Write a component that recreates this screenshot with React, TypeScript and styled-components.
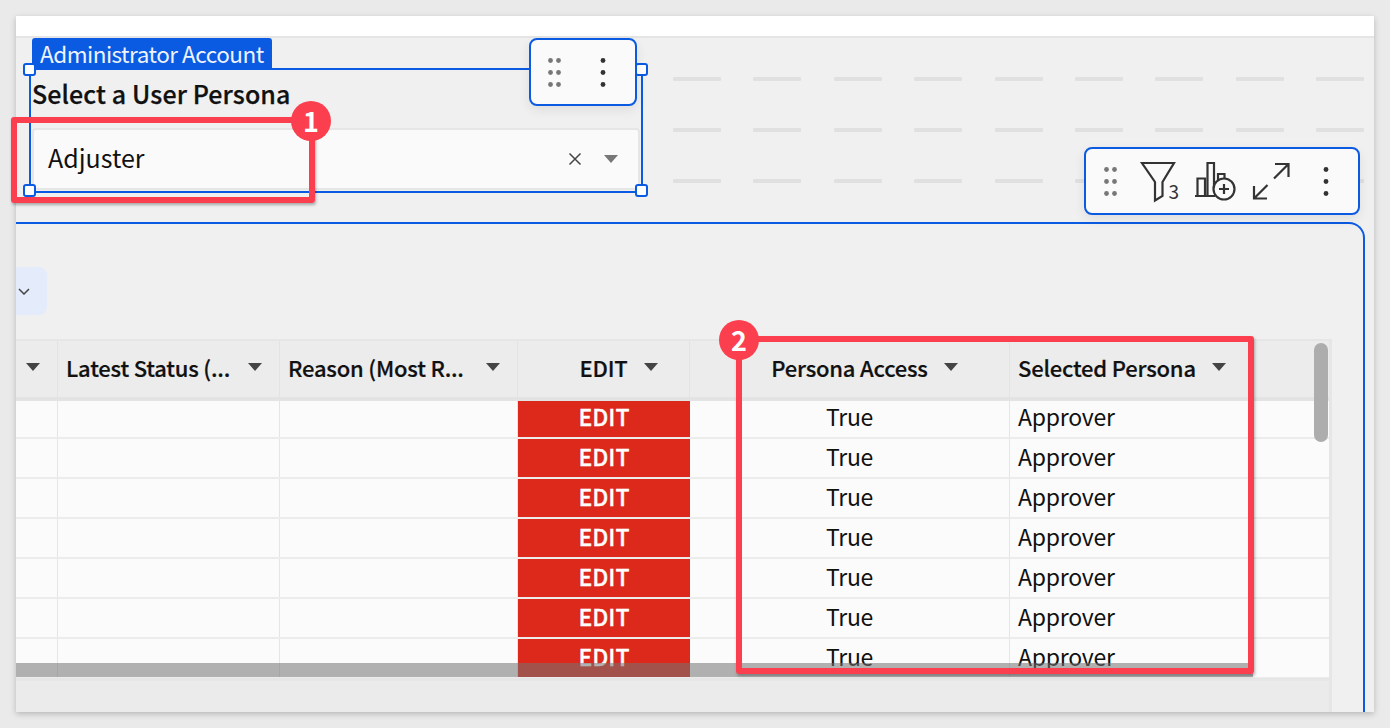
import styled, { createGlobalStyle } from "styled-components";

const BLUE = "#0b5be2";
const RED = "#fb3f4e";
const FONT = `"Noto Sans CJK SC", "Noto Sans", sans-serif`;

const GlobalStyle = createGlobalStyle`
  html, body {
    margin: 0;
    padding: 0;
    background: #eaeaea;
    overflow: hidden;
  }
  body {
    font-family: ${FONT};
    color: #111;
  }
  * {
    box-sizing: border-box;
  }
`;

const Stage = styled.div`
  position: relative;
  width: 1390px;
  height: 728px;
  padding: 16px;
  overflow: hidden;
`;

const Page = styled.div`
  width: 1358px;
  height: 696px;
  display: flex;
  flex-direction: column;
  background: #f0f0f0;
  box-shadow: 0 2px 6px rgba(0, 0, 0, 0.22);
  overflow: hidden;
`;

const TopStrip = styled.div`
  flex: none;
  height: 22px;
  background: #fff;
  border-bottom: 2px solid #e5e5e5;
`;

const Canvas = styled.div`
  position: relative;
  flex: 1;
  min-height: 0;
  display: flex;
  flex-direction: column;
`;

const TopRow = styled.div`
  flex: none;
  height: 184px;
  display: flex;
`;

const ControlColumn = styled.div`
  flex: none;
  width: 614px;
  margin-left: 13px;
  display: flex;
  flex-direction: column;
`;

const ControlTab = styled.div`
  align-self: flex-start;
  margin-left: 3px;
  width: 240px;
  height: 30px;
  padding-left: 8px;
  background: ${BLUE};
  color: #eef3fd;
  border-radius: 3px 3px 0 0;
  font-size: 22.5px;
  letter-spacing: -0.5px;
  line-height: 30px;
  white-space: nowrap;
`;

const ControlFrame = styled.div`
  position: relative;
  height: 125px;
  padding: 0 1px;
  border: 2px solid ${BLUE};
`;

const ControlTitle = styled.div`
  height: 50px;
  font-size: 25px;
  font-weight: 500;
  letter-spacing: 0.1px;
  -webkit-text-stroke: 0.25px #111;
  line-height: 46px;
  white-space: nowrap;
`;

const SelectBox = styled.div`
  margin-top: 8px;
  height: 62px;
  display: flex;
  align-items: center;
  padding: 0 20px 0 14px;
  background: #fafafa;
  border: 2px solid #e6e6e6;
  border-radius: 4px;
`;

const SelectValue = styled.span`
  flex: 1;
  padding-bottom: 5px;
  font-size: 25px;
  line-height: 34px;
`;

const Handle = styled.span<{ $right?: boolean; $bottom?: boolean }>`
  position: absolute;
  width: 13px;
  height: 13px;
  background: #fff;
  border: 2px solid ${BLUE};
  border-radius: 3px;
  ${(p) => (p.$right ? "right: -7px;" : "left: -8px;")}
  ${(p) => (p.$bottom ? "bottom: -6px;" : "top: -7px;")}
`;

const GuideRows = styled.div`
  flex: none;
  margin-left: 30px;
  padding-top: 39px;
  display: flex;
  flex-direction: column;
  gap: 47px;
`;

const GuideRow = styled.div`
  display: flex;
  gap: 32.4px;
`;

const GuideDash = styled.span`
  width: 48px;
  height: 4px;
  background: #e0e0e0;
  border-radius: 1px;
`;

const FloatingBar = styled.div<{ $top: number; $right: number; $w: number; $h: number }>`
  position: absolute;
  top: ${(p) => p.$top}px;
  right: ${(p) => p.$right}px;
  width: ${(p) => p.$w}px;
  height: ${(p) => p.$h}px;
  display: flex;
  align-items: center;
  background: #fafafa;
  border: 2px solid ${BLUE};
  border-radius: 8px;
  box-shadow: 0 4px 12px rgba(0, 0, 0, 0.08);
`;

const BarIcon = styled.svg<{ $ml: number }>`
  flex: none;
  margin-left: ${(p) => p.$ml}px;
  display: block;
  overflow: visible;
`;

const Panel = styled.div`
  flex: 1;
  min-height: 0;
  margin-right: 9px;
  display: flex;
  flex-direction: column;
  padding-top: 43px;
  border-top: 2px solid ${BLUE};
  border-right: 2px solid ${BLUE};
  border-radius: 0 16px 0 0;
`;

const FilterPill = styled.div`
  flex: none;
  width: 31px;
  height: 48px;
  display: flex;
  align-items: center;
  justify-content: flex-end;
  padding-right: 17px;
  background: #e4ebfb;
  border-radius: 0 8px 8px 0;
`;

const TableWrap = styled.div`
  position: relative;
  flex: 1;
  min-height: 0;
  width: 1316px;
  margin-top: 24px;
  display: flex;
  flex-direction: column;
  border-top: 2px solid #e6e6e6;
  border-right: 3px solid #e6e6e6;
  overflow: hidden;
`;

const COLUMNS = "42px 222px 238px 172px 320px 319px";

const HeaderRow = styled.div`
  position: relative;
  z-index: 1;
  flex: none;
  height: 60px;
  display: grid;
  grid-template-columns: ${COLUMNS};
  background: #ececec;
  border-bottom: 4px solid #e3e3e3;
`;

type HeaderAlign = "end" | "between" | "start" | "center";

const HEADER_LAYOUT: Record<HeaderAlign, string> = {
  end: "justify-content: flex-end; padding: 0 17px 0 8px;",
  between: "justify-content: space-between; padding: 0 17px 0 8px;",
  start: "justify-content: flex-start; gap: 16px; padding: 0 8px;",
  center: "justify-content: center; gap: 16px; padding: 0 0 0 30px;",
};

const HeaderCell = styled.div<{ $align: HeaderAlign }>`
  display: flex;
  align-items: center;
  ${(p) => HEADER_LAYOUT[p.$align]}
  padding-bottom: 5px;
  border-right: 1px solid #e3e3e3;
  font-size: 22px;
  font-weight: 500;
  letter-spacing: -0.2px;
  -webkit-text-stroke: 0.2px #111;
  line-height: 30px;
  white-space: nowrap;
  &:last-child {
    border-right: none;
  }
`;

const BodyRows = styled.div`
  flex: none;
  height: 279px;
  margin-top: -2px;
  overflow: hidden;
`;

const Row = styled.div`
  height: 40px;
  display: grid;
  grid-template-columns: ${COLUMNS};
  background: #fbfbfb;
  border-bottom: 2px solid #ececec;
`;

const Cell = styled.div<{ $center?: boolean }>`
  padding: 0 8px;
  border-right: 1px solid #e5e5e5;
  font-size: 23px;
  letter-spacing: -0.25px;
  line-height: 34px;
  text-align: ${(p) => (p.$center ? "center" : "left")};
  &:last-child {
    border-right: none;
  }
`;

const EditCell = styled.div`
  background: #dd281c;
  color: #fff;
  font-size: 23px;
  font-weight: 500;
  -webkit-text-stroke: 0.3px #fff;
  line-height: 34px;
  text-align: center;
`;

const FooterBar = styled.div`
  flex: 1;
  background: #ebebeb;
  border-top: 3px solid #e6e6e6;
`;

const HScrollThumb = styled.div`
  position: absolute;
  left: 0;
  top: 322px;
  width: 1237px;
  height: 14px;
  background: rgba(115, 115, 115, 0.55);
`;

const VScrollThumb = styled.div`
  position: absolute;
  top: 2px;
  left: 1298px;
  width: 14px;
  height: 99px;
  background: #adadad;
  border-radius: 7px;
  z-index: 2;
`;

const Callout = styled.div<{ $x: number; $y: number; $w: number; $h: number }>`
  position: absolute;
  z-index: 5;
  left: ${(p) => p.$x}px;
  top: ${(p) => p.$y}px;
  width: ${(p) => p.$w}px;
  height: ${(p) => p.$h}px;
  border: 6px solid ${RED};
  border-radius: 3px;
  box-shadow: 1px 2px 3px rgba(0, 0, 0, 0.3);
`;

const CalloutBadge = styled.div<{ $x: number; $y: number }>`
  position: absolute;
  z-index: 6;
  left: ${(p) => p.$x}px;
  top: ${(p) => p.$y}px;
  width: 40px;
  height: 40px;
  display: flex;
  align-items: center;
  justify-content: center;
  background: ${RED};
  color: #fff;
  border-radius: 50%;
  font-size: 27px;
  font-weight: 700;
  line-height: 40px;
`;

const Caret = ({ color = "#444" }: { color?: string }) => (
  <svg width="14" height="8" viewBox="0 0 14 8">
    <path d="M0 0h14L7 8z" fill={color} />
  </svg>
);

const Dots = ({ columns, color }: { columns: number[]; color: string }) => (
  <>
    {columns.map((cx) =>
      [2.5, 14.5, 26.5].map((cy) => (
        <circle key={`${cx}-${cy}`} cx={cx} cy={cy} r="2.4" fill={color} />
      ))
    )}
  </>
);

const rows = [0, 1, 2, 3, 4, 5, 6];
const guideLines = [0, 1, 2];
const guideDashes = [0, 1, 2, 3, 4, 5, 6, 7, 8];

function App() {
  return (
    <Stage>
      <GlobalStyle />
      <Page>
        <TopStrip />
        <Canvas>
          <TopRow>
            <ControlColumn>
              <ControlTab>Administrator Account</ControlTab>
              <ControlFrame>
                <Handle />
                <Handle $right />
                <Handle $bottom />
                <Handle $right $bottom />
                <ControlTitle>Select a User Persona</ControlTitle>
                <SelectBox>
                  <SelectValue>Adjuster</SelectValue>
                  <svg width="14" height="14" viewBox="0 0 14 14">
                    <path d="M1.5 1.5l11 11M12.5 1.5l-11 11" stroke="#444" strokeWidth="1.5" />
                  </svg>
                  <BarIcon $ml={22} width="14" height="8" viewBox="0 0 14 8">
                    <path d="M0 0h14L7 8z" fill="#777" />
                  </BarIcon>
                </SelectBox>
              </ControlFrame>
            </ControlColumn>
            <GuideRows>
              {guideLines.map((line) => (
                <GuideRow key={line}>
                  {guideDashes.map((dash) => (
                    <GuideDash key={dash} />
                  ))}
                </GuideRow>
              ))}
            </GuideRows>
          </TopRow>

          <FloatingBar $top={0} $right={737} $w={108} $h={68}>
            <BarIcon $ml={17} width="14" height="29" viewBox="0 0 14 29">
              <Dots columns={[2.5, 10.5]} color="#777" />
            </BarIcon>
            <BarIcon $ml={38} width="6" height="29" viewBox="0 0 6 29">
              <Dots columns={[3]} color="#333" />
            </BarIcon>
          </FloatingBar>

          <FloatingBar $top={109} $right={14} $w={276} $h={68}>
            <BarIcon $ml={18} width="14" height="29" viewBox="0 0 14 29">
              <Dots columns={[2.5, 10.5]} color="#777" />
            </BarIcon>
            <BarIcon $ml={22} width="40" height="40" viewBox="0 0 40 40">
              <path
                d="M2 2h32L22.5 21v14l-7.500 4.500V21z"
                fill="none"
                stroke="#333"
                strokeWidth="2.200"
                strokeLinejoin="miter"
              />
              <text x="28.500" y="38" fontSize="19" fill="#333" fontFamily={FONT}>
                3
              </text>
            </BarIcon>
            <BarIcon $ml={14} width="42" height="40" viewBox="0 0 42 40">
              <path
                d="M1 35h20M3.500 35V17.500h7.500V35M13.500 35V2h6.500v25M24 19v-6h6.500v6"
                fill="none"
                stroke="#333"
                strokeWidth="2.200"
              />
              <circle cx="30" cy="28" r="10.500" fill="#fafafa" stroke="#333" strokeWidth="2.200" />
              <path d="M25 28h10M30 23v10" stroke="#333" strokeWidth="2.200" />
            </BarIcon>
            <BarIcon $ml={16} width="38" height="38" viewBox="0 0 38 38">
              <path
                d="M23 2h13.500v13M36.500 2L22 16.500M2 24v12.500h13M2 36.500L15.500 23"
                fill="none"
                stroke="#333"
                strokeWidth="2.200"
              />
            </BarIcon>
            <BarIcon $ml={33} width="6" height="29" viewBox="0 0 6 29">
              <Dots columns={[3]} color="#333" />
            </BarIcon>
          </FloatingBar>

          <Panel>
            <FilterPill>
              <svg width="12" height="7" viewBox="0 0 12 7">
                <path d="M1 1l5 5 5-5" fill="none" stroke="#444" strokeWidth="1.5" />
              </svg>
            </FilterPill>
            <TableWrap>
              <HeaderRow>
                <HeaderCell $align="end">
                  <Caret />
                </HeaderCell>
                <HeaderCell $align="between">
                  Latest Status (...
                  <Caret />
                </HeaderCell>
                <HeaderCell $align="between">
                  Reason (Most R...
                  <Caret />
                </HeaderCell>
                <HeaderCell $align="center">
                  EDIT
                  <Caret />
                </HeaderCell>
                <HeaderCell $align="center">
                  Persona Access
                  <Caret />
                </HeaderCell>
                <HeaderCell $align="start">
                  Selected Persona
                  <Caret />
                </HeaderCell>
              </HeaderRow>
              <BodyRows>
                {rows.map((row) => (
                  <Row key={row}>
                    <Cell />
                    <Cell />
                    <Cell />
                    <EditCell>EDIT</EditCell>
                    <Cell $center>True</Cell>
                    <Cell>Approver</Cell>
                  </Row>
                ))}
              </BodyRows>
              <FooterBar />
              <HScrollThumb />
              <VScrollThumb />
            </TableWrap>
          </Panel>
        </Canvas>
      </Page>

      <Callout $x={11} $y={117} $w={304} $h={86} />
      <CalloutBadge $x={291} $y={101}>1</CalloutBadge>
      <Callout $x={736} $y={336} $w={518} $h={338} />
      <CalloutBadge $x={719} $y={320}>2</CalloutBadge>
    </Stage>
  );
}

export default App;
